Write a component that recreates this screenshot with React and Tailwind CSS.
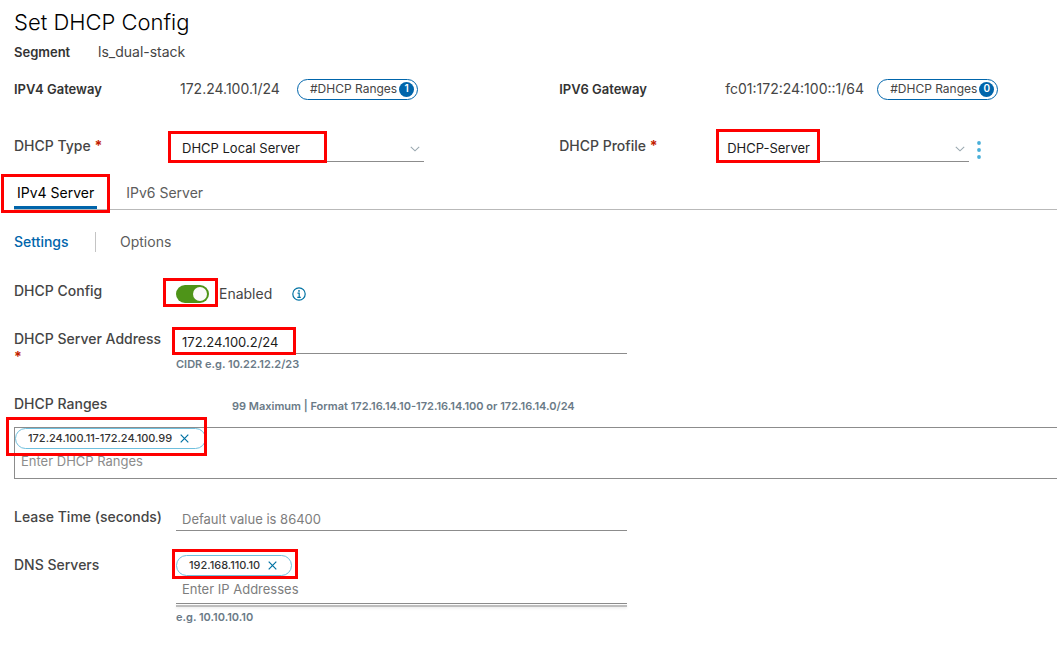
import { useState } from 'react'

const LABEL = 'w-[162px] shrink-0 pr-3 text-sm leading-[18px] font-medium text-[#454545]'
const FIELD = 'w-full border-b border-[#8c8c8c] bg-transparent px-[6px] text-[13px] text-[#1b1b1b] placeholder:text-[#7d7d7d] outline-none'
const HINT = 'text-[11px] font-semibold text-[#6a7a87]'

// red frame around the thing the reader should look at
const Mark = ({ className }) => (
  <span aria-hidden="true" className={`pointer-events-none absolute z-10 border-3 border-[#fe0000] ${className}`} />
)

const Required = () => <span className="font-bold text-[#c21d00]">*</span>

function RangesPill({ count }) {
  return (
    <button className="flex h-[21px] items-center gap-0.5 rounded-full border border-[#0065ab] pr-[3px] pl-3 text-xs text-[#454545]">
      <span>#DHCP Ranges</span>
      <span className="flex size-[15px] items-center justify-center rounded-full bg-[#0065ab] text-[10px] font-semibold text-white">{count}</span>
    </button>
  )
}

function Chip({ value, onRemove, className }) {
  return (
    <div className={`flex h-[21px] items-center gap-2 rounded-full border border-[#6fbfdd] pl-3 text-[11px] font-medium text-[#333] ${className}`}>
      <span>{value}</span>
      <button aria-label={`Remove ${value}`} onClick={onRemove}>
        <svg width="9" height="9" viewBox="0 0 9 9" fill="none" stroke="#0072a3" strokeWidth="1.2">
          <path d="M.7.7l7.6 7.6M8.3.7L.7 8.3" />
        </svg>
      </button>
    </div>
  )
}

function Select({ id, options, markClass }) {
  return (
    <div className="relative h-[30px] w-[248px]">
      <select id={id} className={`${FIELD} h-[30px] appearance-none pt-[5px]`}>
        {options.map(o => <option key={o}>{o}</option>)}
      </select>
      <svg className="pointer-events-none absolute top-[14px] right-1 h-[6px] w-[10px]" viewBox="0 0 10 6" fill="none" stroke="#9aa8b0" strokeWidth="1.1">
        <path d="M.8.8L5 4.8 9.2.8" />
      </svg>
      <Mark className={markClass} />
    </div>
  )
}

export default function App() {
  const [tab, setTab] = useState('IPv4 Server')
  const [section, setSection] = useState('Settings')
  const [enabled, setEnabled] = useState(true)
  const [ranges, setRanges] = useState(['172.24.100.11-172.24.100.99'])
  const [dns, setDns] = useState(['192.168.110.10'])

  return (
    <main className="min-h-screen overflow-x-hidden bg-white pt-2 pb-9 pl-[14px] font-['Inter',sans-serif] text-[#454545]">
      <h1 className="text-[22px] leading-7 font-light text-black">Set DHCP Config</h1>

      <div className="flex h-8 items-center text-sm">
        <span className="w-[84px] text-[13px] font-semibold text-[#333]">Segment</span>
        <span>ls_dual-stack</span>
      </div>

      {/* Gateways */}
      <div className="grid h-[42px] grid-cols-[minmax(0,23fr)_minmax(0,21fr)] items-center text-sm">
        <div className="flex items-center">
          <span className="w-[166px] text-[13px] font-semibold text-[#333]">IPV4 Gateway</span>
          <span className="w-[117px]">172.24.100.1/24</span>
          <RangesPill count={1} />
        </div>
        <div className="flex items-center">
          <span className="w-[166px] text-[13px] font-semibold text-[#333]">IPV6 Gateway</span>
          <span className="w-[152px]">fc01:172:24:100::1/64</span>
          <RangesPill count={0} />
        </div>
      </div>

      {/* Type + profile */}
      <div className="mt-[22px] grid grid-cols-[minmax(0,23fr)_minmax(0,21fr)]">
        <div className="flex">
          <label htmlFor="type" className={`${LABEL} pt-[5px]`}>DHCP Type <Required /></label>
          <Select id="type" options={['DHCP Local Server', 'DHCP Relay', 'Gateway DHCP Server']} markClass="-top-px -left-2 h-8 w-[159px]" />
        </div>
        <div className="flex">
          <label htmlFor="profile" className={`${LABEL} pt-[5px]`}>DHCP Profile <Required /></label>
          <Select id="profile" options={['DHCP-Server']} markClass="-top-[3px] -left-[5px] h-[34px] w-[104px]" />
          <button aria-label="Profile actions" className="ml-2 flex h-[30px] items-center pt-[6px]">
            <svg width="4" height="18" viewBox="0 0 4 18" fill="#49afd9">
              <circle cx="2" cy="2" r="1.9" />
              <circle cx="2" cy="9" r="1.9" />
              <circle cx="2" cy="16" r="1.9" />
            </svg>
          </button>
        </div>
      </div>

      <div role="tablist" className="mt-3 flex h-9 gap-[26px] border-b border-[#b9b9b9] text-sm">
        {['IPv4 Server', 'IPv6 Server'].map(t => (
          <button key={t} role="tab" aria-selected={tab === t} onClick={() => setTab(t)}
            className={`relative border-b-3 px-[3px] pt-[6px] ${tab === t ? 'border-[#0065ab] text-black' : 'border-transparent text-[#5c5c5c]'}`}>
            {t}
            {t === 'IPv4 Server' && <Mark className="top-0 -right-[13px] -bottom-[7px] -left-[13px]" />}
          </button>
        ))}
      </div>

      <nav className="mt-[22px] flex h-5 items-center text-sm">
        <button onClick={() => setSection('Settings')}
          className={`w-[82px] border-r border-[#c4c4c4] text-left ${section === 'Settings' ? 'font-medium text-[#0065ab]' : ''}`}>
          Settings
        </button>
        <button onClick={() => setSection('Options')}
          className={`pl-6 ${section === 'Options' ? 'font-medium text-[#0065ab]' : 'text-[#5c5c5c]'}`}>
          Options
        </button>
      </nav>

      <div className="mt-[30px] flex h-6">
        <label htmlFor="enabled" className={LABEL}>DHCP Config</label>
        <div className="relative flex h-6 items-center">
          <input id="enabled" type="checkbox" role="switch" checked={enabled} onChange={e => setEnabled(e.target.checked)}
            className="flex h-[18px] w-[33px] appearance-none items-center rounded-full bg-[#919191] px-[2px] before:size-[14px] before:rounded-full before:bg-[#fafafa] checked:justify-end checked:bg-[#4e9418]" />
          <Mark className="-top-1 -right-[9px] -left-[13px] h-[29px]" />
        </div>
        <span className="w-[83px] pl-[10px] text-sm leading-6">{enabled ? 'Enabled' : 'Disabled'}</span>
        <button aria-label="About DHCP config">
          <svg width="14" height="14" viewBox="0 0 14 14" fill="none" stroke="#0072a3" strokeWidth="1.2">
            <circle cx="7" cy="7" r="6.2" />
            <path d="M5.5 6.2h1.7v4M5.3 10.3h3.5" />
            <circle cx="7" cy="3.9" r=".9" fill="#0072a3" stroke="none" />
          </svg>
        </button>
      </div>

      <div className="mt-6 flex">
        <label htmlFor="address" className="w-[162px] shrink-0 text-sm leading-[18px] font-medium">
          DHCP Server Address
          <span className="block"><Required /></span>
        </label>
        <div className="relative w-[451px]">
          <input id="address" defaultValue="172.24.100.2/24" className={`${FIELD} block h-6`} />
          <p className={`${HINT} leading-5`}>CIDR e.g. 10.22.12.2/23</p>
          <Mark className="-top-[3px] -left-1 h-7 w-[124px]" />
        </div>
      </div>

      {/* Ranges */}
      <div className="mt-[21px] flex h-8">
        <label htmlFor="ranges" className="w-[218px] text-sm leading-[18px] font-medium">DHCP Ranges</label>
        <span className={`${HINT} leading-[22px]`}>99 Maximum | Format 172.16.14.10-172.16.14.100 or 172.16.14.0/24</span>
      </div>
      <div className="relative border-y border-l border-[#8c8c8c] pb-[5px]">
        {ranges.map(r => (
          <Chip key={r} value={r} className="w-[191px]" onRemove={() => setRanges(ranges.filter(x => x !== r))} />
        ))}
        <input id="ranges" placeholder="Enter DHCP Ranges" className="block h-6 w-full bg-transparent px-[6px] text-[13px] outline-none placeholder:text-[#8c8c8c]" />
        <Mark className="-top-[11px] -left-[9px] h-[39px] w-[201px]" />
      </div>

      <div className="mt-7 flex">
        <label htmlFor="lease" className="w-[162px] shrink-0 text-sm leading-5 font-medium">Lease Time (seconds)</label>
        <div className="w-[451px]">
          <input id="lease" placeholder="Default value is 86400" className={`${FIELD} block h-6`} />
        </div>
      </div>

      <div className="mt-6 flex">
        <label htmlFor="dns" className="w-[162px] shrink-0 text-sm leading-5 font-medium">DNS Servers</label>
        <div className="relative w-[451px]">
          {dns.map(d => (
            <Chip key={d} value={d} className="w-[116px]" onRemove={() => setDns(dns.filter(x => x !== d))} />
          ))}
          <input id="dns" placeholder="Enter IP Addresses" className={`${FIELD} block h-7 pb-0.5`} />
          <div className="mt-px h-[2px] bg-[#bdbdbd] shadow-sm" />
          <p className={`${HINT} leading-5`}>e.g. 10.10.10.10</p>
          <Mark className="-top-[6px] -left-1 h-[30px] w-[126px]" />
        </div>
      </div>
    </main>
  )
}
